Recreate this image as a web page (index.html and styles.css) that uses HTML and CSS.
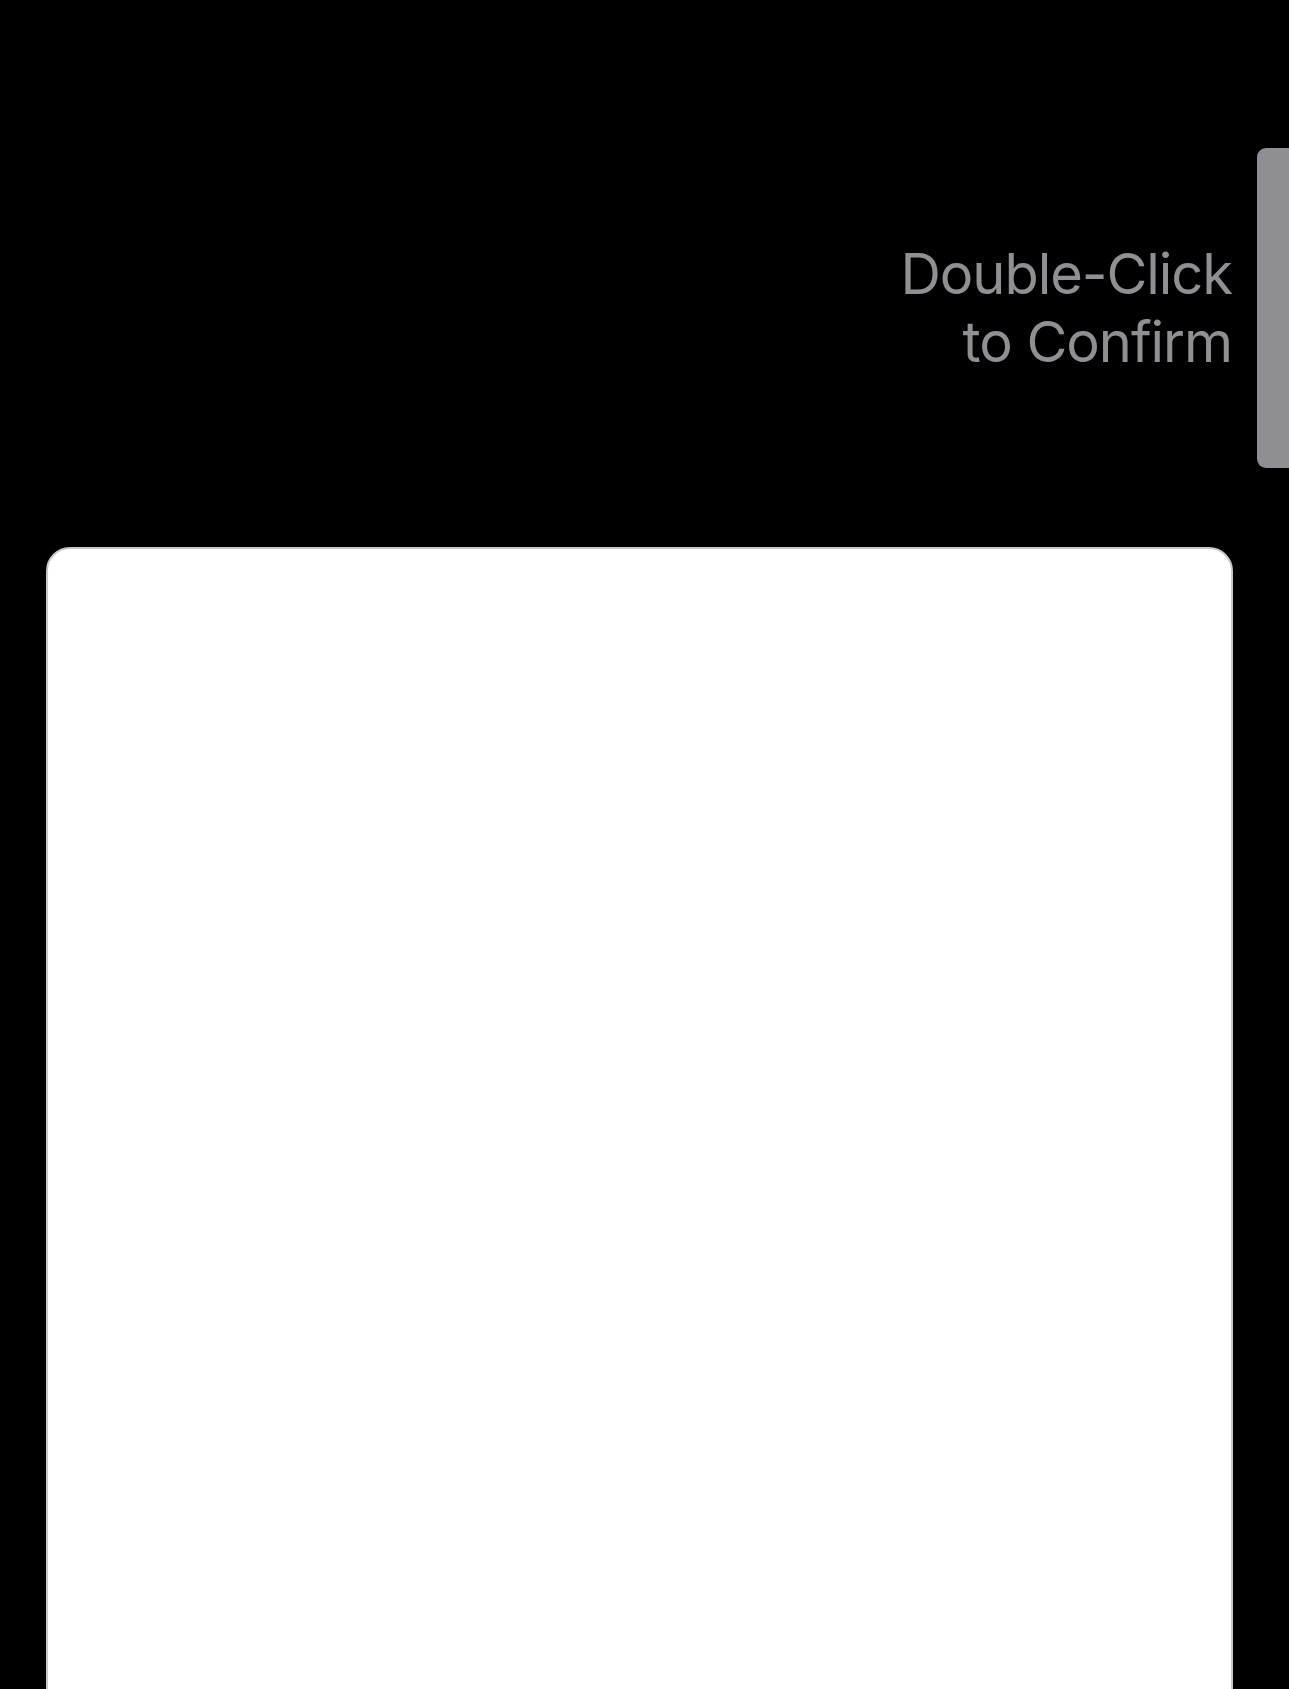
FILE: index.html
```html
<!DOCTYPE html>
<html lang="en">
<head>
<meta charset="utf-8">
<title>Double-Click to Confirm</title>
<link rel="stylesheet" href="styles.css">
</head>
<body>
<div class="screen">
  <div class="top">
    <div class="prompt">Double-Click<br>to Confirm</div>
    <div class="side-button"></div>
  </div>
  <div class="sheet"></div>
</div>
</body>
</html>
```

FILE: styles.css
```css
html, body {
  margin: 0;
  padding: 0;
  background: #000;
  overflow: hidden;
}
.screen {
  width: 1289px;
  height: 1689px;
  background: #000;
  display: flex;
  flex-direction: column;
  overflow: hidden;
}
.top {
  height: 547px;
  display: flex;
  justify-content: flex-end;
  align-items: flex-start;
  flex-shrink: 0;
}
.prompt {
  margin-top: 240px;
  font-family: Inter, "Noto Sans", sans-serif;
  font-size: 56px;
  line-height: 68px;
  color: #909094;
  text-align: right;
  letter-spacing: -1.05px;
}
.side-button {
  margin-top: 148px;
  margin-left: 25px;
  width: 32px;
  height: 320px;
  background: #8e8e93;
  border-radius: 9px 0 0 9px;
}
.sheet {
  margin-left: 46px;
  width: 1187px;
  height: 1200px;
  flex-shrink: 0;
  box-sizing: border-box;
  background: #fff;
  border: 2px solid #c8c8c8;
  border-radius: 24px;
}
```
